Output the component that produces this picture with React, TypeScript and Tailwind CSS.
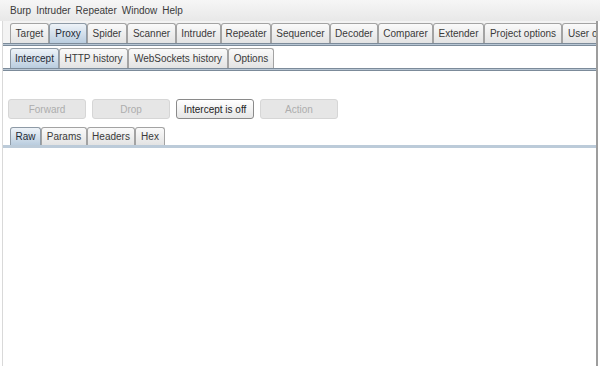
import React from "react";

const font = { fontFamily: '"Liberation Sans", Arial, sans-serif' };

const topTabs: [string, number][] = [
  ["Target", 39],
  ["Proxy", 38],
  ["Spider", 40],
  ["Scanner", 49],
  ["Intruder", 45],
  ["Repeater", 50],
  ["Sequencer", 59],
  ["Decoder", 48],
  ["Comparer", 55],
  ["Extender", 51],
  ["Project options", 78],
  ["User options", 80],
];

const proxyTabs: [string, number][] = [
  ["Intercept", 49],
  ["HTTP history", 69],
  ["WebSockets history", 100],
  ["Options", 46],
];

const msgTabs: [string, number][] = [
  ["Raw", 31],
  ["Params", 46],
  ["Headers", 48],
  ["Hex", 30],
];

function Tab({ label, width, active, height, left }: { label: string; width: number; active: boolean; height: string; left?: boolean }) {
  return (
    <div
      style={{ width }}
      className={
        "shrink-0 flex items-center border border-b-0 rounded-t-[3px] text-[10px] whitespace-nowrap overflow-hidden " +
        height +
        (left ? " justify-start pl-[5px]" : " justify-center") +
        (active
          ? " bg-gradient-to-b from-[#eef3f8] to-[#bacddf] border-[#8e9aa6] text-[#1e2a36]"
          : " bg-gradient-to-b from-[#fafafa] to-[#e3e3e3] border-[#a3a3a3] text-[#3a3a3a]")
      }
    >
      {label}
    </div>
  );
}

function Divider() {
  return <div className="h-[3px] border-t border-b border-[#7c8b9a] bg-[#b9c7d5]" />;
}

function Button({ label, enabled }: { label: string; enabled?: boolean }) {
  return (
    <div
      className={
        "w-[78px] h-[20px] flex items-center justify-center rounded-[3px] text-[10px] " +
        (enabled
          ? "border border-[#8a8a8a] bg-gradient-to-b from-[#ffffff] to-[#e6e6e6] text-[#222]"
          : "border border-[#d6d6d6] bg-[#e6e6e6] text-[#adadad]")
      }
    >
      {label}
    </div>
  );
}

export default function App() {
  return (
    <div className="w-[600px] h-[366px] bg-white overflow-hidden flex flex-col" style={font}>
      <div className="h-[21px] shrink-0 flex items-center gap-[5px] pl-[10px] text-[10px] text-[#3a3a3a] bg-gradient-to-b from-[#f6f6f6] to-[#e8e8e8]">
        <span>Burp</span>
        <span>Intruder</span>
        <span>Repeater</span>
        <span>Window</span>
        <span>Help</span>
      </div>
      <div className="flex-1 ml-[2px] w-[596px] border-l border-[#d9d9d9] border-r-2 border-r-[#9d9d9d] flex flex-col bg-white">
        <div className="pt-[2px] bg-[#f3f3f3] overflow-hidden">
          <div className="flex pl-[7px]">
            {topTabs.map(([l, w]) => (
              <Tab key={l} label={l} width={w} active={l === "Proxy"} height="h-[20px]" left={l === "User options"} />
            ))}
          </div>
        </div>
        <Divider />
        <div className="pt-[2px]">
          <div className="flex pl-[7px]">
            {proxyTabs.map(([l, w]) => (
              <Tab key={l} label={l} width={w} active={l === "Intercept"} height="h-[20px]" />
            ))}
          </div>
        </div>
        <Divider />
        <div className="flex gap-[6px] pl-[5px] pt-[28px]">
          <Button label="Forward" />
          <Button label="Drop" />
          <Button label="Intercept is off" enabled />
          <Button label="Action" />
        </div>
        <div className="flex pl-[7px] pt-[8px]">
          {msgTabs.map(([l, w]) => (
            <Tab key={l} label={l} width={w} active={l === "Raw"} height="h-[18px]" />
          ))}
        </div>
        <div className="h-[3px] bg-[#bccbd9]" />
        <div className="flex-1 bg-white" />
      </div>
    </div>
  );
}
